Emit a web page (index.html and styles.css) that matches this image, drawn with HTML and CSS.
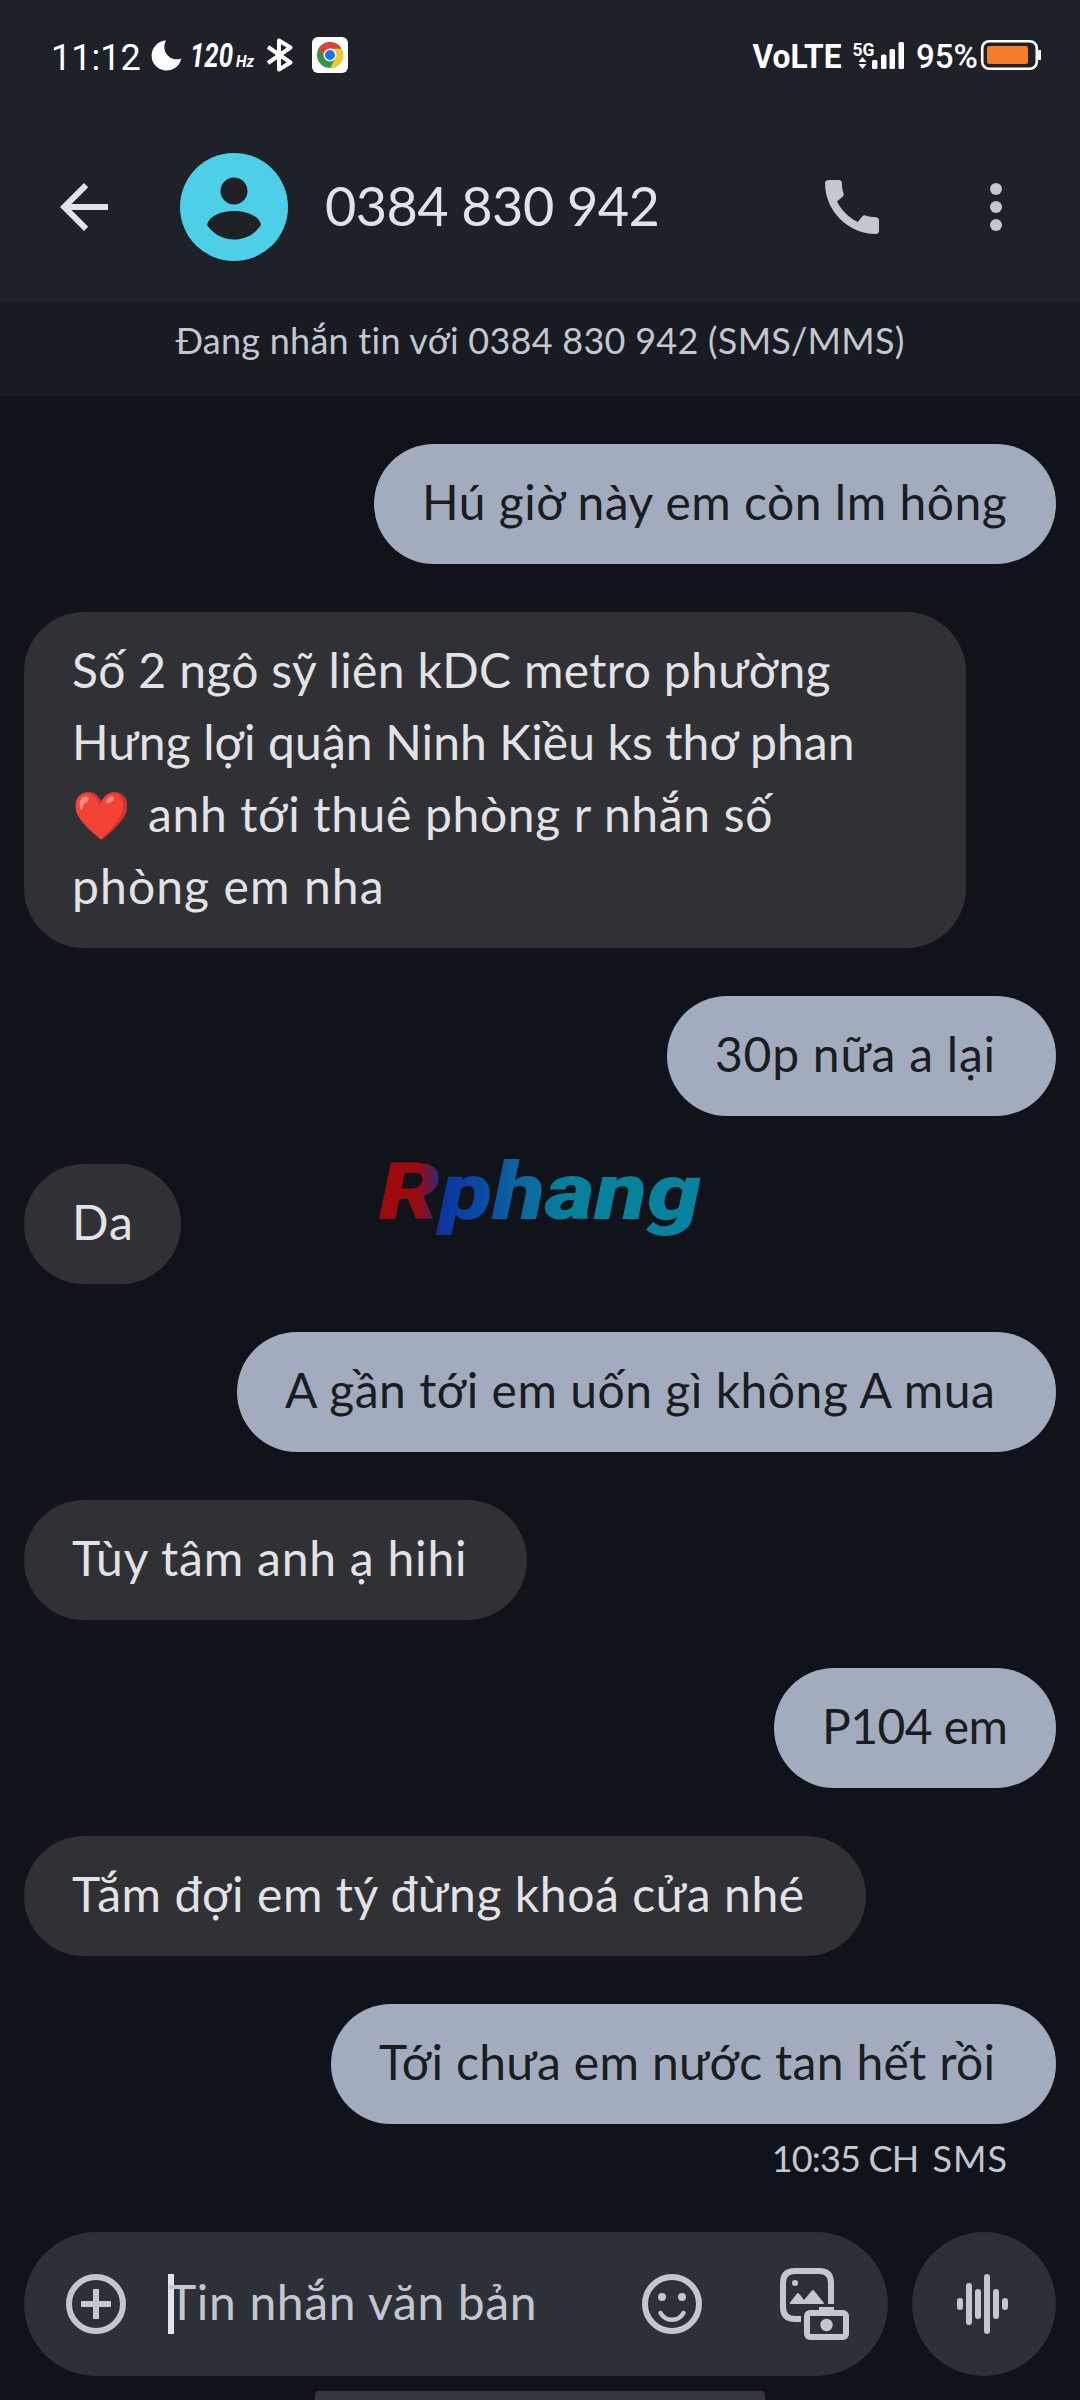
FILE: index.html
```html
<!DOCTYPE html>
<html lang="vi">
<head>
<meta charset="utf-8">
<title>0384 830 942</title>
<link rel="stylesheet" href="styles.css">
</head>
<body>
<div class="screen">
  <header class="top">
    <div class="status">
      <div class="status-left">
        <span class="clock">11:12</span>
        <svg class="moon" width="30" height="30" viewBox="0 0 30 30"><path d="M14 .5A15 15 0 1 0 29.300 18.500 12.500 12.500 0 0 1 14 .5Z" fill="#fff"/></svg>
        <svg class="hertz" width="68" height="44" viewBox="0 -4 68 44" fill="#fff">
          <text x="0" y="30" font-size="34" font-weight="700" font-style="italic" textLength="43" lengthAdjust="spacingAndGlyphs">120</text>
          <text x="46" y="30" font-size="17" font-weight="700" font-style="italic" textLength="18" lengthAdjust="spacingAndGlyphs">Hz</text>
        </svg>
        <svg class="bluetooth" width="30" height="36" viewBox="0 0 30 36" fill="none" stroke="#fff" stroke-width="4" stroke-linejoin="round"><path d="M3 10 25.500 25.500 14 32.500V3.500L25.500 10.500 3 26"/></svg>
        <svg class="chrome" width="36" height="36" viewBox="0 0 36 36">
          <rect width="36" height="36" rx="6" fill="#fff"/>
          <circle cx="18" cy="18" r="13" fill="#2a9a48"/>
          <path d="M18 11.500H29.260A13 13 0 0 1 18 31L23.630 21.250Z" fill="#fcc62f"/>
          <path d="M6.740 11.500A13 13 0 0 1 29.260 11.500H18L12.370 21.250Z" fill="#db4437"/>
          <circle cx="18" cy="18" r="6.500" fill="#fff"/><circle cx="18" cy="18" r="5" fill="#1f73e8"/>
        </svg>
      </div>
      <svg class="status-right" width="292" height="40" viewBox="750 35 292 40" fill="#fff">
        <text x="752.500" y="67.700" font-size="33" font-weight="700" textLength="89" lengthAdjust="spacingAndGlyphs">VoLTE</text>
        <text x="852.500" y="56" font-size="19" font-weight="700" textLength="22" lengthAdjust="spacingAndGlyphs">5G</text>
        <path d="m858.500 62 4-5 4 5Zm0 2h8l-4 5Z"/>
        <rect x="872" y="60" width="5.500" height="9" rx="1.500"/><rect x="881" y="54.500" width="5.500" height="14.500" rx="1.500"/><rect x="889.500" y="49" width="5.500" height="20" rx="1.500"/><rect x="898.500" y="42" width="5.500" height="27" rx="1.500"/>
        <text x="916" y="67.700" font-size="34" font-weight="500" textLength="62" lengthAdjust="spacingAndGlyphs">95%</text>
        <rect x="982.200" y="41.200" width="54.600" height="27.600" rx="7" fill="none" stroke="#fff" stroke-width="2.600"/>
        <rect x="987" y="46" width="41" height="18" rx="2" fill="#f57c2b"/>
        <path d="M1038 50h3v10h-3z"/>
      </svg>
    </div>
    <div class="appbar">
      <svg class="back" width="72" height="72" viewBox="0 0 24 24" fill="#e0e2ec"><path d="M20 11H7.830l5.590-5.590L12 4l-8 8 8 8 1.410-1.410L7.830 13H20v-2z"/></svg>
      <svg class="avatar" width="108" height="108" viewBox="0 0 108 108"><circle cx="54" cy="54" r="54" fill="#4dcfe7"/><g fill="#1e2126"><circle cx="54" cy="38" r="13.500"/><path d="M27 72C29 62 43 58 54 58S79 62 81 72C75 81 65 86.500 54 86.500S33 81 27 72Z"/></g></svg>
      <h1 class="title">0384 830 942</h1>
      <svg class="call" width="72" height="72" viewBox="0 0 24 24" fill="#c4c6d0"><path d="M20.010 15.380c-1.230 0-2.420-.2-3.530-.56-.35-.12-.74-.03-1.010.24l-1.570 1.970c-2.830-1.350-5.480-3.900-6.890-6.830l1.950-1.660c.27-.28.35-.67.24-1.020-.37-1.110-.56-2.300-.56-3.530 0-.54-.45-.99-.99-.99H4.190C3.650 3 3 3.240 3 3.990 3 13.280 10.730 21 20.010 21c.71 0 .99-.63.99-1.180v-3.450c0-.54-.45-.99-.99-.99z"/></svg>
      <svg width="72" height="72" viewBox="0 0 24 24" fill="#c4c6d0"><circle cx="12" cy="6" r="2"/><circle cx="12" cy="12" r="2"/><circle cx="12" cy="18" r="2"/></svg>
    </div>
  </header>
  <div class="banner">Đang nhắn tin với 0384 830 942 (SMS/MMS)</div>

  <main class="thread">
    <div class="bubble sent hu">Hú giờ này em còn lm hông</div>
    <div class="bubble received address">
      <div class="line-a">Số 2 ngô sỹ liên kDC metro phường</div>
      <div class="line-b">Hưng lợi quận Ninh Kiều ks thơ phan</div>
      <div class="line-c"><span class="heart">❤️</span>anh tới thuê phòng r nhắn số</div>
      <div class="line-d">phòng em nha</div>
    </div>
    <div class="bubble sent later">30p nữa a lại</div>
    <div class="bubble received da">Da</div>
    <div class="bubble sent near">A gần tới em uốn gì không A mua</div>
    <div class="bubble received tuy">Tùy tâm anh ạ hihi</div>
    <div class="bubble sent room">P104 em</div>
    <div class="bubble received door">Tắm đợi em tý đừng khoá cửa nhé</div>
    <div class="bubble sent melt">Tới chưa em nước tan hết rồi</div>
    <div class="meta"><span class="time">10:35 CH</span><span class="kind">SMS</span></div>
  </main>

  <footer class="composer">
    <div class="field">
      <svg width="72" height="72" viewBox="0 0 24 24" fill="none" stroke="#c4c6d0" stroke-width="2"><circle cx="12" cy="12" r="9"/><path d="M12 7v10M7 12h10"/></svg>
      <div class="placeholder">Tin nhắn văn bản</div>
      <svg class="smile" width="72" height="72" viewBox="0 0 72 72" fill="none" stroke="#c4c6d0" stroke-width="6"><circle cx="36" cy="36" r="27"/><path d="M24.500 45c5 9 18 9 23 0" stroke-width="4.500" stroke-linecap="round"/><g fill="#c4c6d0" stroke="none"><circle cx="26" cy="29" r="4"/><circle cx="46" cy="29" r="4"/></g></svg>
      <svg width="72" height="72" viewBox="0 0 72 72" fill="none" stroke="#c4c6d0" stroke-width="6"><path d="M51 36V15Q51 3 39 3H15Q3 3 3 15V39Q3 51 15 51H21"/><rect x="27" y="45" width="39" height="24" rx="3"/><g fill="#c4c6d0" stroke="none"><circle cx="15" cy="15" r="3"/><path d="M10 34.500 17 25.500q1-1 2 0l5 6.500L32 22.500q1-1 2 0L43.500 34.500q1 1.500-1 1.500H11q-2 0-1-1.500Z"/><path d="M39 39h15v4H39z"/><circle cx="46.500" cy="57" r="6.200"/></g></svg>
    </div>
    <div class="voice"><svg width="72" height="72" viewBox="0 0 72 72" stroke="#c4c6d0" stroke-width="6" stroke-linecap="round"><path d="M12 33v6M21 18v36M30 24v24M39 9v54M48 24v24M57 33v6"/></svg></div>
  </footer>
  <div class="handle"></div>

  <svg class="watermark" width="360" height="130" viewBox="360 1125 360 130">
    <defs><linearGradient id="ink" gradientUnits="userSpaceOnUse" x1="380" y1="0" x2="701" y2="0"><stop offset="0" stop-color="#a00a0c"/><stop offset=".12" stop-color="#980b10"/><stop offset=".17" stop-color="#4a2060"/><stop offset=".19" stop-color="#0c35a0"/><stop offset=".3" stop-color="#0a48a3"/><stop offset=".42" stop-color="#0d629f"/><stop offset=".58" stop-color="#08809c"/><stop offset="1" stop-color="#08829e"/></linearGradient></defs>
    <text x="379" y="1219" font-size="79" font-weight="900" font-style="italic" textLength="322" lengthAdjust="spacingAndGlyphs" fill="url(#ink)">Rphang</text>
  </svg>
</div>
</body>
</html>
```
FILE: styles.css
```css
* { box-sizing: border-box; }
body { margin: 0; background: #10131a; }
svg { display: block; flex: none; overflow: visible; }
svg text { font-family: Roboto, sans-serif; }

.screen {
  position: relative;
  display: flex;
  flex-direction: column;
  width: 1080px;
  height: 2400px;
  overflow: hidden;
  background: #10131a;
  color: #c4c6d0;
  font-family: Lato, "Noto Sans", sans-serif;
  white-space: nowrap;
}

.top { height: 303px; background: #1e2128; }
.status {
  display: flex;
  justify-content: space-between;
  height: 111px;
  padding: 35px 38px 0 51px;
}
.status-left { display: flex; height: 40px; align-items: center; }
.clock { width: 101px; padding-top: 5px; color: #fff; font: 36px/40px Roboto, sans-serif; }
.hertz { margin-left: 8px; }
.bluetooth { margin-left: 7px; }
.chrome { margin-left: 17px; }
.appbar { display: flex; align-items: center; height: 192px; padding: 0 48px; }
.avatar { margin-left: 60px; }
.title {
  flex: 1;
  margin: -2px 0 0 37px;
  color: #e0e2ec;
  font-size: 54px;
  font-weight: 400;
  line-height: 72px;
  letter-spacing: -.55px;
}
.call { margin-right: 72px; }

.banner {
  height: 93px;
  padding-top: 16px;
  background: #181b22;
  font-size: 36px;
  line-height: 43px;
  letter-spacing: .25px;
  text-align: center;
}

.thread {
  display: flex;
  flex-direction: column;
  gap: 48px;
  height: 1836px;
  padding: 48px 24px 0;
}
.bubble {
  flex: none;
  padding: 22px 48px 26px;
  border-radius: 60px;
  font-size: 48px;
  line-height: 72px;
}
.sent { align-self: flex-end; background: #a2acbe; color: #1a1c20; }
.received { align-self: flex-start; background: #303134; color: #e3e2e6; }
.hu { width: 682px; letter-spacing: .5px; }
.address { width: 942px; }
.address div { height: 72px; }
.line-a { letter-spacing: .33px; }
.line-b { letter-spacing: .1px; }
.line-c { display: flex; letter-spacing: .66px; }
.line-d { letter-spacing: 1.1px; }
.heart { width: 76px; font-size: 47px; letter-spacing: 0; }
.later { width: 389px; letter-spacing: .75px; }
.da { width: 157px; letter-spacing: 1px; }
.near { width: 819px; letter-spacing: .52px; }
.tuy { width: 503px; letter-spacing: .78px; }
.room { width: 282px; letter-spacing: -.6px; }
.door { width: 842px; letter-spacing: .58px; }
.melt { width: 725px; letter-spacing: .32px; }
.meta {
  display: flex;
  gap: 14px;
  align-self: flex-end;
  margin: -36px 48px 0 0;
  font-size: 36px;
  line-height: 44px;
}
.time { letter-spacing: -.8px; }
.kind { letter-spacing: 1px; }

.composer { display: flex; gap: 24px; padding: 0 24px; }
.field {
  display: flex;
  align-items: center;
  width: 864px;
  height: 144px;
  padding: 0 36px;
  border-radius: 72px;
  background: #2e3038;
}
.placeholder {
  width: 468px;
  height: 60px;
  margin-left: 36px;
  border-left: 6px solid #e0e2ec;
  font-size: 48px;
  line-height: 56px;
  letter-spacing: .65px;
  text-indent: -6px;
}
.smile { margin-right: 72px; }
.voice {
  display: flex;
  align-items: center;
  justify-content: center;
  width: 144px;
  height: 144px;
  border-radius: 50%;
  background: #2e3038;
}
.handle {
  width: 450px;
  height: 9px;
  margin: 15px auto 0;
  border-radius: 4px 4px 0 0;
  background: #34353e;
}

/* Logo laid over the conversation */
.watermark { position: absolute; left: 360px; top: 1125px; }
```
